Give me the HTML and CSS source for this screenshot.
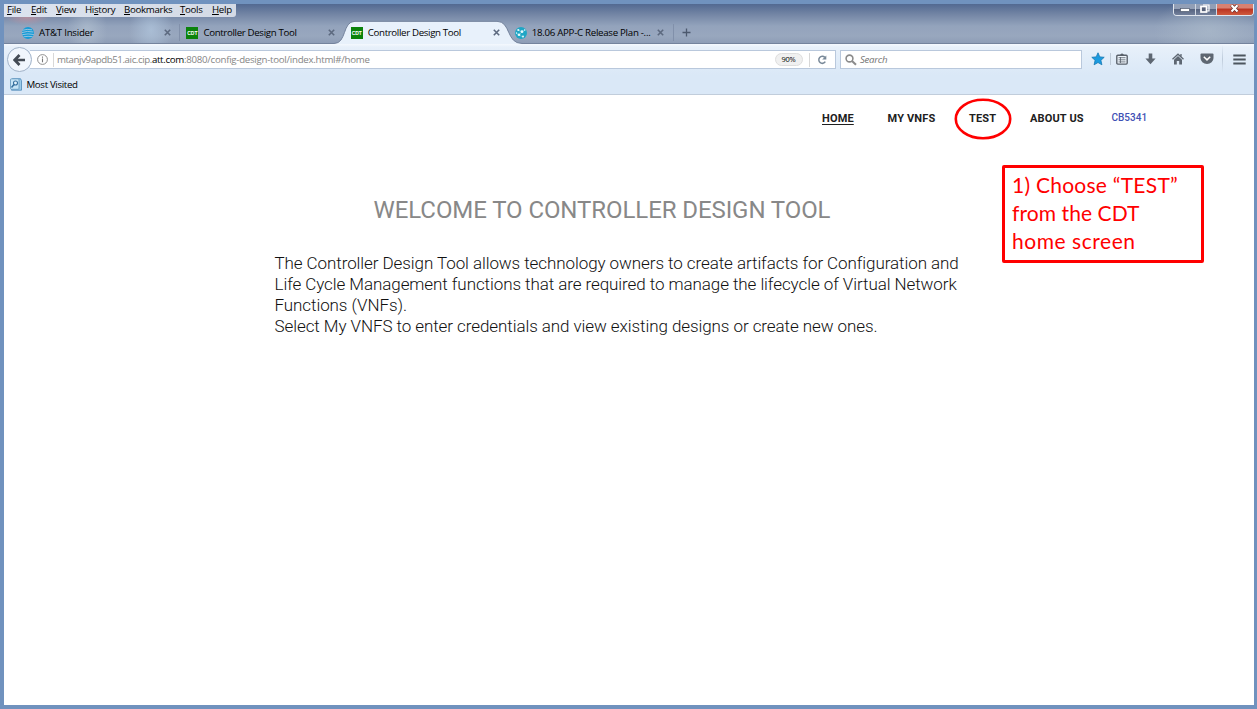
FILE: index.html
```html
<!DOCTYPE html>
<html lang="en">
<head>
<meta charset="utf-8">
<title>Controller Design Tool</title>
<link rel="stylesheet" href="styles.css">
</head>
<body>
<div class="window">
  <header class="titlebar">
    <div class="titlebar-top">
      <nav class="menubar">
        <span class="m-file"><u>F</u>ile</span><span class="m-edit"><u>E</u>dit</span><span class="m-view"><u>V</u>iew</span><span class="m-history">Hi<u>s</u>tory</span><span class="m-bookmarks"><u>B</u>ookmarks</span><span class="m-tools"><u>T</u>ools</span><span class="m-help"><u>H</u>elp</span>
      </nav>
      <div class="controls">
        <span class="ctl ctl-min"><svg width="22" height="12"><rect x="6.5" y="4.5" width="9" height="3" fill="#fff" stroke="#4d586c" stroke-width=".7"/></svg></span>
        <span class="ctl ctl-max"><svg width="20" height="12"><path d="M7 1h6v6h-2" fill="none" stroke="#fff" stroke-width="1.200"/><rect x="5" y="2.500" width="5.500" height="5.500" fill="#56617a" stroke="#fff" stroke-width="1.700"/></svg></span>
        <span class="ctl ctl-close"><svg width="36" height="12"><path d="M14.500 1.200l6 6.300M20.500 1.200l-6 6.300" stroke="#5a2a2a" stroke-width="3.400"/><path d="M14.500 1.200l6 6.300M20.500 1.200l-6 6.300" stroke="#fff" stroke-width="2.200"/></svg></span>
      </div>
    </div>
    <div class="tabs">
      <div class="tab">
        <svg class="fav" viewBox="0 0 12 12"><circle cx="6" cy="6" r="6" fill="#159bd7"/><path d="M.5 3.300Q5 1.700 10 2.800M0 5.600Q5 3.500 11.300 5M.3 7.700Q6 6.200 11.800 7.500M1.600 9.800Q6 8.900 10.600 9.700" fill="none" stroke="#9ec7e1" stroke-width=".9"/></svg>
        <span class="label l-att">AT&amp;T Insider</span>
        <svg class="x" viewBox="0 0 7 7"><path d="M.8.8l5.400 5.400M6.200.8L.8 6.200"/></svg>
      </div>
      <div class="tab">
        <span class="fav cdt">CDT</span>
        <span class="label l-cdt">Controller Design Tool</span>
        <svg class="x" viewBox="0 0 7 7"><path d="M.8.8l5.400 5.400M6.200.8L.8 6.200"/></svg>
      </div>
      <div class="tab active">
        <svg class="tab-shape" width="190" height="24" viewBox="0 0 190 24"><path d="M0 23.500C13 23.500 8 1.500 21 1.500H163C177 1.500 172 23.500 188 23.500V24H0Z" fill="#e8f1fb"/><path d="M0 23.500C13 23.500 8 1.300 21 1.300H163C177 1.300 172 23.500 188 23.500" fill="none" stroke="#74839d"/></svg>
        <span class="fav cdt">CDT</span>
        <span class="label l-cdt">Controller Design Tool</span>
        <svg class="x" viewBox="0 0 7 7"><path d="M.8.8l5.400 5.400M6.200.8L.8 6.200"/></svg>
      </div>
      <div class="tab">
        <svg class="fav" viewBox="0 0 12 12"><circle cx="6" cy="6" r="6" fill="#20a6c5"/><path d="M3 3l4 2 3-2M7 5L4 8l4 2M4 8L1 6" stroke="#8ed4e5" fill="none" stroke-width=".6"/><g fill="#e6f9fc"><circle cx="3.300" cy="3" r="1.100"/><circle cx="7" cy="4.700" r="1.400"/><circle cx="9.700" cy="3" r=".8"/><circle cx="4" cy="7.700" r="1.300"/><circle cx="8" cy="9.500" r="1"/><circle cx="1.500" cy="6" r=".7"/></g></svg>
        <span class="label l-plan">18.06 APP-C Release Plan -...</span>
        <svg class="x" viewBox="0 0 7 7"><path d="M.8.8l5.400 5.400M6.200.8L.8 6.200"/></svg>
      </div>
      <svg class="plus" viewBox="0 0 9 9"><path d="M4.500.5v8M.5 4.500h8"/></svg>
    </div>
  </header>

  <div class="toolbar">
    <div class="nav-main">
      <span class="back"><svg width="13" height="12" viewBox="0 0 13 12"><path d="M6.500 1L1.700 6l4.800 5M2 6h10" fill="none" stroke="#434b55" stroke-width="2.700"/></svg></span>
      <div class="urlbar">
        <svg class="info" viewBox="0 0 11 11"><circle cx="5.500" cy="5.500" r="4.900" fill="none" stroke="#858585" stroke-width=".9"/><path d="M5.500 4.600v3.700M5.500 2.500v1.200" stroke="#777" stroke-width="1.100"/></svg>
        <i class="url-sep"></i>
        <span class="url"><span class="u1">mtanjv9apdb51.aic.cip.</span><span class="u2">att.com</span><span class="u3">:8080/config-design-tool/index.html#/home</span></span>
        <span class="zoom">90%</span>
        <i class="reload-sep"></i>
        <svg class="reload" viewBox="0 0 10 10"><path d="M7.800 2.400A3.500 3.500 0 1 0 8.300 6.700" fill="none" stroke="#788898" stroke-width="1.500"/><path d="M9.300.4v4.100H5.200z" fill="#788898"/></svg>
      </div>
    </div>
    <div class="search">
      <svg width="12" height="12" viewBox="0 0 12 12"><circle cx="4.500" cy="4.500" r="3.400" fill="none" stroke="#8b8b8b" stroke-width="1.600"/><path d="M7 7l4 3.800" stroke="#8b8b8b" stroke-width="2"/></svg>
      <span>Search</span>
    </div>
    <div class="tools">
      <svg width="14" height="14" viewBox="0 0 14 14"><path d="M7 .8l1.800 4.100 4.400.4-3.300 3 1 4.500L7 10.500l-3.900 2.300 1-4.500-3.300-3 4.400-.4z" fill="#1b9be0" stroke="#1477b2" stroke-width=".8"/></svg>
      <i class="tool-sep"></i>
      <svg class="t-list" width="12" height="12" viewBox="0 0 12 12"><path d="M3.500 2.200L6 .3l2.500 1.900" fill="#59616b"/><rect x=".8" y="2.300" width="10.400" height="8.800" rx="1" fill="#eef5fc" stroke="#59616b" stroke-width="1.400"/><path d="M2.500 4.700h7M2.500 6.800h7M2.500 8.900h7M4.500 4v6" stroke="#59616b" stroke-width=".8"/></svg>
      <svg class="t-down" width="11" height="12" viewBox="0 0 11 12"><path d="M3.700.5h3.600v5h3.300L5.500 11.200.4 5.500h3.300z" fill="#5e6772"/></svg>
      <svg class="t-home" width="12" height="12" viewBox="0 0 12 12"><path d="M2 6.700L6 3.100l4 3.600v4.800H7.200V8H4.800v3.500H2z" fill="#5e6772"/><path d="M.5 6.300L6 1.200l5.500 5.100M9 1v3" fill="none" stroke="#5e6772" stroke-width="1.300"/></svg>
      <svg class="t-pocket" width="14" height="12" viewBox="0 0 14 12"><path d="M1.500.5h11q1 0 1 1v3.500a6.500 6 0 0 1-13 0V1.500q0-1 1-1z" fill="#5e6772"/><path d="M3.800 3.800L7 6.900l3.200-3.100" fill="none" stroke="#fff" stroke-width="1.500"/></svg>
      <i class="menu-sep"></i>
      <svg class="t-menu" width="13" height="11" viewBox="0 0 13 11"><path d="M.3 1.500h12.400M.3 5.500h12.400M.3 9.500h12.400" stroke="#4d565f" stroke-width="2"/></svg>
    </div>
  </div>
  <div class="bookmarks">
    <svg width="12" height="13" viewBox="0 0 12 13"><path d="M2.500.7h8l1 2v9.500h-10z" fill="#9bcbe9" stroke="#4d87b5" stroke-width=".8"/><rect x=".5" y=".8" width="8.500" height="10.500" rx="1" fill="#c5e4f6" stroke="#5f96bd" stroke-width=".8"/><circle cx="5.500" cy="5" r="2" fill="#e4f4fc" stroke="#356f9d" stroke-width="1.100"/><path d="M4 6.500L1.500 9.500" stroke="#356f9d" stroke-width="1.500"/></svg>
    <span>Most Visited</span>
  </div>

  <main class="page">
    <nav class="site-nav">
      <a class="n-home">HOME</a><a class="n-vnfs">MY VNFS</a><a class="n-test">TEST<svg class="ring" width="58" height="42" viewBox="0 0 58 42"><ellipse cx="29" cy="21" rx="27.200" ry="19.200" fill="none" stroke="#f00" stroke-width="2.600"/></svg></a><a class="n-about">ABOUT US</a><span class="n-user">CB5341</span>
    </nav>
    <section class="welcome">
      <h1>WELCOME TO CONTROLLER DESIGN TOOL</h1>
      <p>The Controller Design Tool allows technology owners to create artifacts for Configuration and<br>Life Cycle Management functions that are required to manage the lifecycle of Virtual Network<br>Functions (VNFs).<br>Select My VNFS to enter credentials and view existing designs or create new ones.</p>
    </section>
    <aside class="note"><span class="note-1">1) Choose “TEST”</span><br><span class="note-2">from the CDT</span><br><span class="note-3">home screen</span></aside>
  </main>
</div>
</body>
</html>
```
FILE: styles.css
```css
* { box-sizing: border-box; }
body { margin: 0; background: #7092be; font-family: "Open Sans", "Noto Sans", sans-serif; color: #000; }
svg { display: block; flex: none; }
.window { width: 1257px; height: 709px; padding: 4px 3px 4px 4px; display: flex; flex-direction: column; overflow: hidden; }

.titlebar { height: 40px; flex: none; border-bottom: 1px solid #74839d; background:
  radial-gradient(ellipse 22px 8px at 23px 13px, rgba(219,145,151,.6), transparent),
  radial-gradient(ellipse 20px 32px at 83px 26px, rgba(190,204,216,.5), transparent),
  radial-gradient(ellipse 22px 30px at 147px 26px, rgba(180,202,225,.65), transparent),
  radial-gradient(ellipse 55px 35px at 1205px 27px, rgba(175,190,205,.6), transparent),
  linear-gradient(#526991 0, #7587a6 11px, #93a3bc 22px, #98a7be 32px, #8e9db6 100%); }
.titlebar-top { display: flex; justify-content: space-between; height: 17px; }
.menubar { display: flex; width: 232px; height: 13px; padding-left: 3px; font-size: 9.7px; line-height: 12px; background: linear-gradient(90deg, #dce3ef, #d4dae5); border-radius: 0 0 3px 0; white-space: nowrap; letter-spacing: -.3px; }
.menubar u { text-underline-offset: 1px; text-decoration-thickness: 1px; }
.m-file { width: 24px; } .m-edit { width: 25px; } .m-view { width: 29px; } .m-history { width: 39px; }
.m-bookmarks { width: 56px; } .m-tools { width: 32px; }
.controls { display: flex; width: 81px; height: 12px; border: 1px solid #e1e6ee; border-top: 0; border-radius: 0 0 4px 4px; overflow: hidden; }
.ctl { height: 11px; background: linear-gradient(#929fb6 0 45%, #55627f 46%, #73809b); border-right: 1px solid #d1d8e2; }
.ctl-min { width: 22px; } .ctl-max { width: 21px; }
.ctl-close { width: 36px; border: 0; background: linear-gradient(#d88172 0 40%, #b9301f 42%, #cf5a3e); }

.tabs { display: flex; height: 23px; padding-left: 18px; align-items: center; }
.tab { position: relative; display: flex; align-items: center; width: 164.400px; height: 23px; }
.tab::after { content: ""; position: absolute; right: 6px; top: 3px; height: 17px; width: 1px; background: #8190aa; }
.tab.active::after, .tab:has(+ .active)::after { display: none; }
.tab > :not(.tab-shape) { position: relative; }
.tab > .tab-shape { position: absolute; left: -17px; top: -1px; }
.fav { width: 12px; height: 12px; margin-right: 5px; flex: none; }
.cdt { background: #0b830b; color: #fff; font: bold 5px/12px "Liberation Sans", sans-serif; text-align: center; }
.label { font-size: 9.700px; line-height: 14px; width: 125px; flex: none; white-space: nowrap; }
.l-att { letter-spacing: -.24px; }
.l-cdt { letter-spacing: -.34px; }
.l-plan { letter-spacing: -.28px; text-indent: -.5px; }
.x { width: 7px; height: 7px; }
.x path { stroke: #5c697f; stroke-width: 1.600; }
.plus { width: 9px; height: 9px; margin-left: 2px; }
.plus path { stroke: #4c596e; stroke-width: 1.300; }

.toolbar { display: flex; flex: none; height: 31px; padding: 0 0 0 3px; align-items: center; background: linear-gradient(#f5f9fe 0, #e7f0fa 3px, #dae8f7 100%); }
.nav-main { display: flex; align-items: center; width: 828.500px; }
.back { z-index: 1; width: 25px; height: 25px; border: 1px solid #a0b2c8; border-radius: 50%; background: #f0f6fd; display: flex; align-items: center; justify-content: center; flex: none; }
.urlbar { display: flex; align-items: center; width: 806px; margin-left: -2px; height: 19px; background: #fff; border: 1px solid #b9c8dc; border-left: 0; padding-left: 6.500px; }
.info { width: 11px; height: 11px; }
.url-sep, .reload-sep { width: 1px; height: 14px; background: #d8d8d8; flex: none; }
.url-sep { margin: 0 4px 0 5px; }
.url { width: 717px; flex: none; font-size: 9.700px; line-height: 14px; color: #858585; white-space: nowrap; text-indent: -.5px; }
.u1 { letter-spacing: -.41px; }
.u2 { color: #000; letter-spacing: -.32px; }
.u3 { letter-spacing: -.27px; }
.zoom { width: 28px; height: 13px; flex: none; border: 1px solid #dedede; border-radius: 7px; background: #f0f0f0; font-size: 7.500px; line-height: 11px; text-align: center; letter-spacing: -.2px; }
.reload-sep { margin: 0 7px 0 6px; }
.reload { width: 10px; height: 10px; }
.search { display: flex; align-items: center; width: 242px; height: 19px; margin-left: 4px; padding-left: 4.500px; background: #fff; border: 1px solid #b9c8dc; font-size: 9.700px; font-style: italic; color: #737373; letter-spacing: -.3px; }
.search span { margin-left: 3px; }
.tools { display: flex; align-items: center; height: 30px; margin: -1px 0 0 9px; }
.tool-sep { width: 1px; height: 12px; background: #bdc9d6; margin: 0 5.500px 0 5px; }
.t-down { margin-left: 16.500px; } .t-home { margin-left: 16.500px; } .t-pocket { margin-left: 15.500px; }
.menu-sep { width: 1px; height: 28px; background: linear-gradient(transparent, #becbda, transparent); margin: 0 10px 0 8.500px; }
.bookmarks { display: flex; flex: none; align-items: center; height: 20px; padding: 0 0 0 6px; border-bottom: 1px solid #c1cddb; background: #dae8f7; font-size: 9.700px; }
.bookmarks span { margin-left: 4.500px; letter-spacing: -.34px; }

.page { position: relative; flex: 1; background: #fff; font-family: Roboto, sans-serif; }
.site-nav { display: flex; height: 47px; padding-left: 818px; align-items: center; font-size: 11px; line-height: 14px; font-weight: 700; color: #202020; white-space: nowrap; letter-spacing: .15px; }
.n-home { width: 65.500px; text-decoration: underline; text-underline-offset: 2px; }
.n-vnfs { width: 81.500px; } .n-test { position: relative; width: 61px; } .n-about { width: 81.500px; }
.ring { position: absolute; left: -15.500px; top: -13.500px; }
.n-user { color: #3f51b5; font-size: 10px; font-weight: 500; margin-top: -2px; letter-spacing: 0; }
.welcome { width: 690px; margin: 54px 0 0 270px; }
h1 { margin: 0 0 0 99.500px; font-size: 24px; line-height: 28px; font-weight: 400; color: #888; white-space: nowrap; letter-spacing: -.08px; }
p { margin: 29px 0 0 .5px; font-size: 17px; line-height: 21px; font-weight: 300; color: #111; white-space: nowrap; letter-spacing: -.078px; }
.note { position: absolute; left: 998px; top: 70px; width: 202px; height: 98px; border: 3px solid #f00; border-radius: 2px; padding: 3px 7px; background: #fff; font: 21px/28px Lato, sans-serif; color: #f00; white-space: nowrap; }
.note-1 { letter-spacing: .25px; }
.note-2 { letter-spacing: .08px; }
.note-3 { letter-spacing: .55px; }
```
